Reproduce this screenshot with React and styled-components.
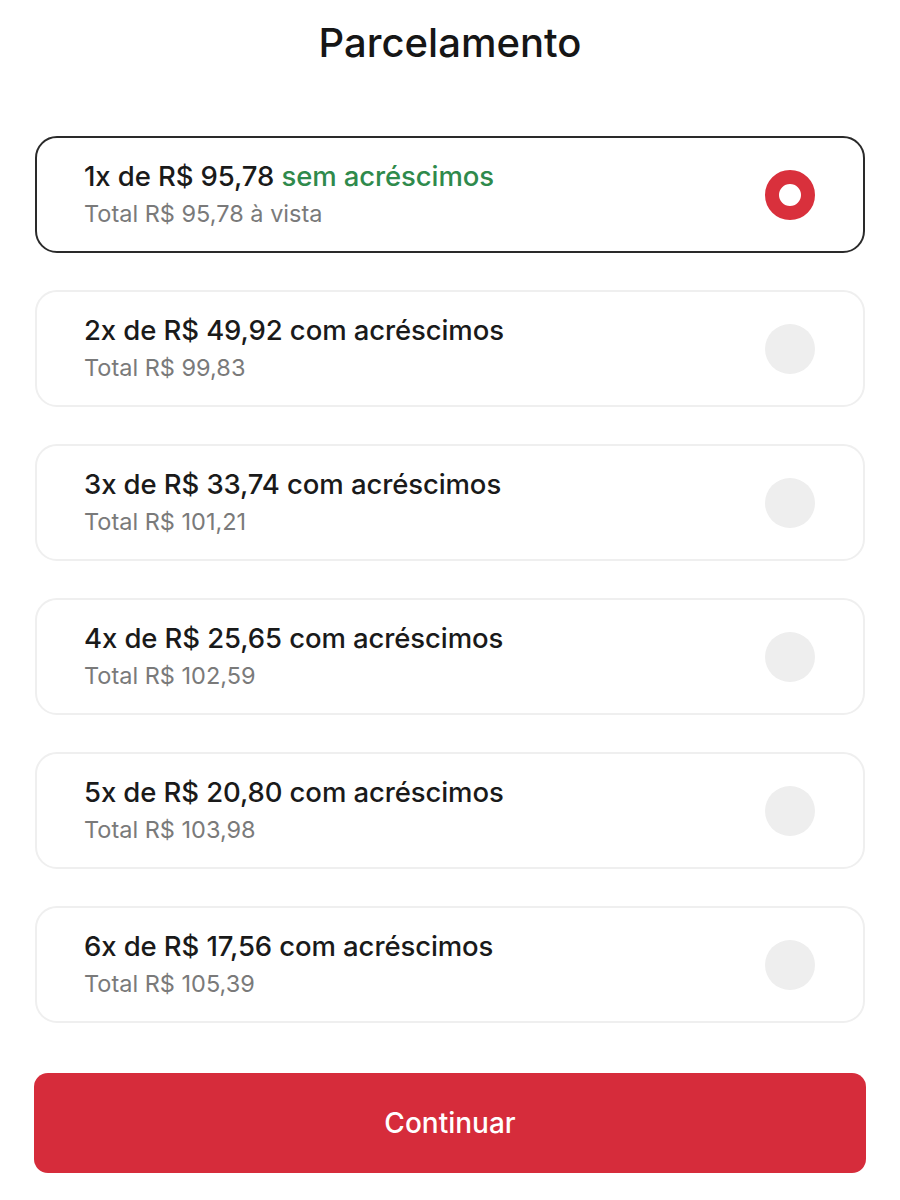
import React, { useState } from 'react'
import styled, { createGlobalStyle } from 'styled-components'

const GlobalStyle = createGlobalStyle`
  body {
    margin: 0;
    background: #ffffff;
    font-family: Inter, "Noto Sans", sans-serif;
    color: #1b1b1b;
  }
`

const Page = styled.div`
  width: 900px;
  padding: 18px 34px 0;
  box-sizing: border-box;
  display: flex;
  flex-direction: column;
`

const Title = styled.h1`
  margin: 0 0 68px;
  text-align: center;
  font-size: 40px;
  font-weight: 500;
  line-height: 50px;
  color: #161616;
`

const List = styled.div`
  display: flex;
  flex-direction: column;
  gap: 37px;
  padding: 0 1px;
`

const Option = styled.div`
  height: 117px;
  box-sizing: border-box;
  border-radius: 22px;
  border: ${({ selected }) => selected ? '2px solid #2a2a2a' : '2px solid #efefef'};
  display: flex;
  align-items: center;
  justify-content: space-between;
  padding: 0 48px 0 47px;
  cursor: pointer;
`

const Info = styled.div`
  display: flex;
  flex-direction: column;
  gap: 7px;
`

const Main = styled.div`
  font-size: 27.5px;
  font-weight: 500;
  line-height: 32px;
  color: #1a1a1a;
  letter-spacing: -0.1px;
`

const Highlight = styled.span`
  color: #2f8a4c;
`

const Sub = styled.div`
  font-size: 23.5px;
  line-height: 30px;
  color: #7a7a7a;
`

const Radio = styled.div`
  width: 50px;
  height: 50px;
  border-radius: 50%;
  box-sizing: border-box;
  background: ${({ selected }) => selected ? '#ffffff' : '#eeeeee'};
  border: ${({ selected }) => selected ? '14px solid #d9303c' : 'none'};
`

const Button = styled.button`
  margin-top: 50px;
  height: 100px;
  border: none;
  border-radius: 14px;
  background: #d62c3b;
  color: #ffffff;
  font-family: Inter, "Noto Sans", sans-serif;
  font-size: 28px;
  font-weight: 500;
  cursor: pointer;
`

const options = [
  { n: 1, value: '95,78', total: '95,78 à vista', free: true },
  { n: 2, value: '49,92', total: '99,83' },
  { n: 3, value: '33,74', total: '101,21' },
  { n: 4, value: '25,65', total: '102,59' },
  { n: 5, value: '20,80', total: '103,98' },
  { n: 6, value: '17,56', total: '105,39' }
]

const App = () => {
  const [selected, setSelected] = useState(1)

  return (
    <Page>
      <GlobalStyle />
      <Title>Parcelamento</Title>
      <List>
        {options.map(o => (
          <Option key={o.n} selected={selected === o.n} onClick={() => setSelected(o.n)}>
            <Info>
              <Main>
                {o.n}x de R$ {o.value}{' '}
                {o.free ? <Highlight>sem acréscimos</Highlight> : 'com acréscimos'}
              </Main>
              <Sub>Total R$ {o.total}</Sub>
            </Info>
            <Radio selected={selected === o.n} />
          </Option>
        ))}
      </List>
      <Button>Continuar</Button>
    </Page>
  )
}

export default App
